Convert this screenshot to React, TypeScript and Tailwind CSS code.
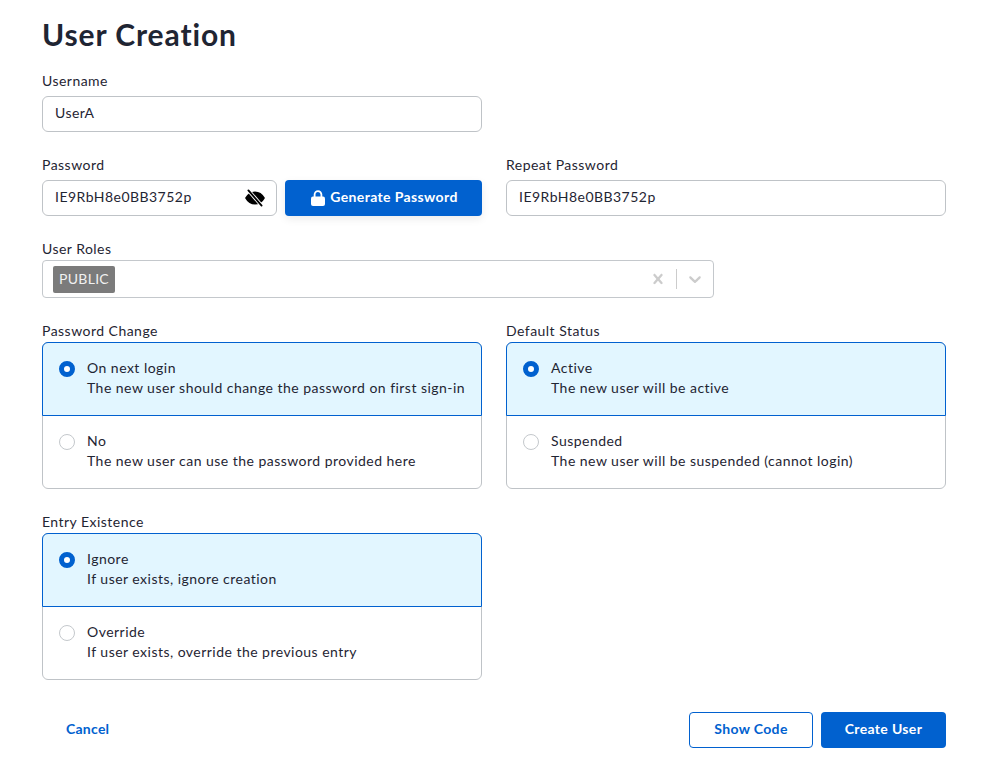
import React from "react";

const Label = ({ children }: { children: React.ReactNode }) => (
  <div className="text-[14px] leading-[18px] text-[#1f2533] tracking-[0.47px]">{children}</div>
);

const Option = ({ title, desc, active }: { title: string; desc: string; active?: boolean }) => (
  <div className="flex h-[73px] items-start pl-[16px] pt-[15px]">
    <div className={`mt-[3px] h-4 w-4 shrink-0 rounded-full ${active ? "border-[5px] border-[#0161cf] bg-white" : "border border-[#c4c8cc] bg-white"}`} />
    <div className="ml-[12px] text-[14px] leading-[20px] text-[#1f2533] tracking-[0.47px]">
      <div>{title}</div>
      <div className="whitespace-nowrap">{desc}</div>
    </div>
  </div>
);

const Group = ({ label, a, b }: { label: string; a: [string, string]; b: [string, string] }) => (
  <div>
    <Label>{label}</Label>
    <div className="relative mt-[2px] h-[147px] rounded-[6px] border border-[#bfc3c7] bg-white">
      <div className="absolute -inset-px h-[74px] overflow-hidden rounded-t-[6px] border border-[#0161cf] bg-[#e2f6ff]">
        <Option title={a[0]} desc={a[1]} active />
      </div>
      <div className="pt-[73px]">
        <Option title={b[0]} desc={b[1]} />
      </div>
    </div>
  </div>
);

export default function App() {
  return (
    <div className="min-h-[773px] bg-white pl-[42px] pr-[45px] pt-[15px]" style={{ fontFamily: 'Lato, sans-serif' }}>
      <h1 className="text-[30px] font-bold leading-[38px] tracking-[0.9px] text-[#1f2533]">User Creation</h1>

      <div className="mt-[19px]">
        <Label>Username</Label>
        <div className="mt-[6px] flex h-9 w-[440px] items-center rounded-[6px] border border-[#bfc3c7] pb-[3px] pl-[12px] text-[14px] text-[#1f2533] tracking-[0.47px]">UserA</div>
      </div>

      <div className="mt-[24px] grid grid-cols-2 gap-x-6">
        <div>
          <Label>Password</Label>
          <div className="mt-[6px] flex gap-2">
            <div className="flex h-9 w-[235px] items-center justify-between rounded-[6px] border border-[#bfc3c7] pl-[12px] pr-[11px] text-[14px] text-[#1f2533] tracking-[0.47px]">
              <span className="-mt-[3px]">IE9RbH8e0BB3752p</span>
              <svg width="20" height="18" viewBox="0 0 20 18">
                <path d="M1.2 9C3.2 5.4 6.3 3.4 10 3.4S16.8 5.4 18.8 9C16.8 12.6 13.7 14.6 10 14.6S3.2 12.6 1.2 9Z" fill="#000" stroke="#000" strokeWidth="2" strokeLinejoin="round" />
                <path d="M3.4 1.4 16.6 16.6" stroke="#fff" strokeWidth="3.6" />
                <path d="M3.4 1.4 16.6 16.6" stroke="#000" strokeWidth="1.8" strokeLinecap="round" />
              </svg>
            </div>
            <button className="flex h-9 w-[197px] items-center justify-center gap-[5px] rounded-[4px] bg-[#0161cf] pl-[2px] text-[14px] font-bold tracking-[0.38px] text-white shadow-[0_3px_8px_rgba(0,0,0,0.08)]">
              <svg width="14" height="16" viewBox="0 0 14 16" fill="#fff">
                <path d="M3.6 7V4.6a3.4 3.4 0 0 1 6.8 0V7" fill="none" stroke="#fff" strokeWidth="1.8" />
                <rect x="0" y="6.4" width="14" height="9.6" rx="2" />
              </svg>
              <span className="-mt-[3px]">Generate Password</span>
            </button>
          </div>
        </div>
        <div>
          <Label>Repeat Password</Label>
          <div className="mt-[6px] flex h-9 items-center rounded-[6px] border border-[#bfc3c7] pb-[3px] pl-[12px] text-[14px] text-[#1f2533] tracking-[0.47px]">IE9RbH8e0BB3752p</div>
        </div>
      </div>

      <div className="mt-[24px]">
        <Label>User Roles</Label>
        <div className="mt-[2px] flex h-[38px] w-[672px] items-center rounded-[4px] border border-[#c4c8cc] pl-[10px]">
          <span className="flex h-[27px] w-[62px] items-center justify-center rounded-[2px] bg-[#7b7b7b] pb-[2px] text-[14px] tracking-[0.3px] text-[#f1f1f1]">PUBLIC</span>
          <div className="ml-auto flex items-center">
            <svg width="20" height="20" viewBox="0 0 20 20" className="fill-[#cccccc]"><path d="M14.348 14.849c-0.469 0.469-1.229 0.469-1.697 0l-2.651-3.030-2.651 3.029c-0.469 0.469-1.229 0.469-1.697 0-0.469-0.469-0.469-1.229 0-1.697l2.758-3.15-2.759-3.152c-0.469-0.469-0.469-1.228 0-1.697s1.228-0.469 1.697 0l2.652 3.031 2.651-3.031c0.469-0.469 1.228-0.469 1.697 0s0.469 1.229 0 1.697l-2.758 3.152 2.758 3.15c0.469 0.469 0.469 1.229 0 1.698z" /></svg>
            <span className="mx-[8px] h-5 w-px bg-[#cccccc]" />
            <svg width="20" height="20" viewBox="0 0 20 20" className="mr-[8px] fill-[#cccccc]"><path d="M4.516 7.548c0.436-0.446 1.043-0.481 1.576 0l3.908 3.747 3.908-3.747c0.533-0.481 1.141-0.446 1.574 0 0.436 0.445 0.408 1.197 0 1.615-0.406 0.418-4.695 4.502-4.695 4.502-0.217 0.223-0.502 0.335-0.787 0.335s-0.57-0.112-0.789-0.335c0 0-4.287-4.084-4.695-4.502s-0.436-1.17 0-1.615z" /></svg>
          </div>
        </div>
      </div>

      <div className="mt-[24px] grid grid-cols-2 gap-x-6">
        <Group label="Password Change" a={["On next login", "The new user should change the password on first sign-in"]} b={["No", "The new user can use the password provided here"]} />
        <Group label="Default Status" a={["Active", "The new user will be active"]} b={["Suspended", "The new user will be suspended (cannot login)"]} />
      </div>

      <div className="mt-[24px] w-[440px]">
        <Group label="Entry Existence" a={["Ignore", "If user exists, ignore creation"]} b={["Override", "If user exists, override the previous entry"]} />
      </div>

      <div className="mt-[32px] flex items-center">
        <button className="ml-[24px] pb-[3px] text-[14px] font-bold tracking-[0.25px] text-[#0161cf]">Cancel</button>
        <button className="ml-auto h-9 w-[124px] rounded-[4px] border border-[#0161cf] bg-white pb-[3px] text-[14px] font-bold tracking-[0.35px] text-[#0161cf]">Show Code</button>
        <button className="ml-2 h-9 w-[125px] rounded-[4px] bg-[#0161cf] pb-[3px] text-[14px] font-bold tracking-[0.35px] text-white">Create User</button>
      </div>
    </div>
  );
}
